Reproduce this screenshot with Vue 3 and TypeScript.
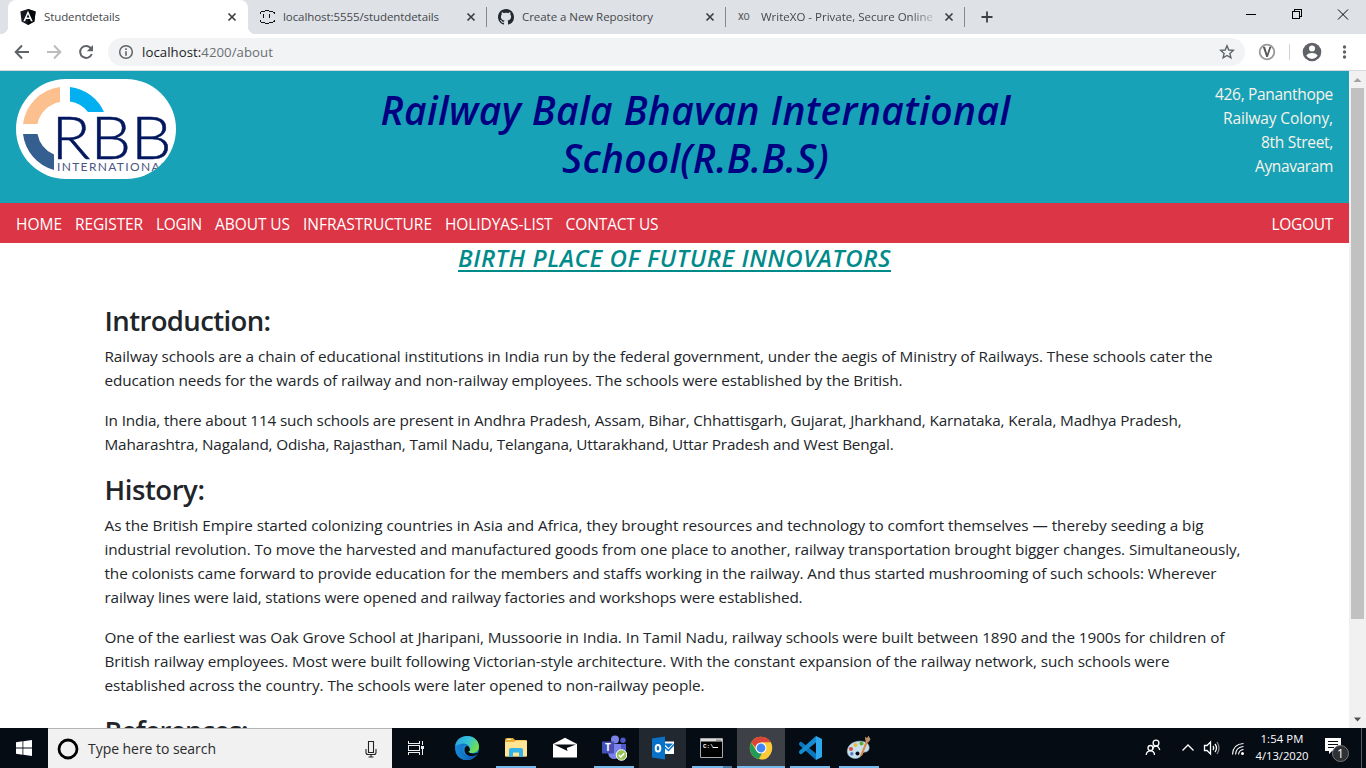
<script setup lang="ts">
import type { Directive } from 'vue'

interface Line { text: string; width: number }
interface Section { title: Line; paragraphs: Line[][] }

// Tracks a line of text out (or in) so that it fills its measure exactly.
const vFit: Directive<HTMLElement, number> = {
  mounted(el, { value }) {
    const count = (el.textContent ?? '').length
    const natural = el.getBoundingClientRect().width
    if (count > 0) el.style.letterSpacing = `${(value - natural) / count}px`
  },
}

const navItems: Line[] = [
  { text: 'HOME', width: 46 },
  { text: 'REGISTER', width: 68 },
  { text: 'LOGIN', width: 46 },
  { text: 'ABOUT US', width: 75 },
  { text: 'INFRASTRUCTURE', width: 129 },
  { text: 'HOLIDYAS-LIST', width: 107.5 },
  { text: 'CONTACT US', width: 93 },
]

const address: Line[] = [
  { text: '426, Pananthope', width: 118 },
  { text: 'Railway Colony,', width: 110 },
  { text: '8th Street,', width: 72 },
  { text: 'Aynavaram', width: 78 },
]

const sections: Section[] = [
  {
    title: { text: 'Introduction:', width: 166 },
    paragraphs: [
      [
        { text: 'Railway schools are a chain of educational institutions in India run by the federal government, under the aegis of Ministry of Railways. These schools cater the', width: 1108 },
        { text: 'education needs for the wards of railway and non-railway employees. The schools were established by the British.', width: 798 },
      ],
      [
        { text: 'In India, there about 114 such schools are present in Andhra Pradesh, Assam, Bihar, Chhattisgarh, Gujarat, Jharkhand, Karnataka, Kerala, Madhya Pradesh,', width: 1077 },
        { text: 'Maharashtra, Nagaland, Odisha, Rajasthan, Tamil Nadu, Telangana, Uttarakhand, Uttar Pradesh and West Bengal.', width: 789 },
      ],
    ],
  },
  {
    title: { text: 'History:', width: 100 },
    paragraphs: [
      [
        { text: 'As the British Empire started colonizing countries in Asia and Africa, they brought resources and technology to comfort themselves — thereby seeding a big', width: 1099 },
        { text: 'industrial revolution. To move the harvested and manufactured goods from one place to another, railway transportation brought bigger changes. Simultaneously,', width: 1136 },
        { text: 'the colonists came forward to provide education for the members and staffs working in the railway. And thus started mushrooming of such schools: Wherever', width: 1112 },
        { text: 'railway lines were laid, stations were opened and railway factories and workshops were established.', width: 698 },
      ],
      [
        { text: 'One of the earliest was Oak Grove School at Jharipani, Mussoorie in India. In Tamil Nadu, railway schools were built between 1890 and the 1900s for children of', width: 1120 },
        { text: 'British railway employees. Most were built following Victorian-style architecture. With the constant expansion of the railway network, such schools were', width: 1065 },
        { text: 'established across the country. The schools were later opened to non-railway people.', width: 600 },
      ],
    ],
  },
  { title: { text: 'References:', width: 143 }, paragraphs: [] },
]
</script>

<template>
  <div class="screen">
    <div class="tabstrip">
      <div class="tab active">
        <svg class="fav" viewBox="0 0 16 16"><path d="M8 0 15.6 2.6 14.4 12.6 8 16 1.6 12.6.4 2.6Z" fill="#14181f" /><path d="M8 0 15.6 2.6 14.4 12.6 8 16Z" fill="#04070c" /><path d="M8 1.8 3.3 12.2H5.1L6 9.9H10L10.9 12.2H12.7ZM8 5.2 9.4 8.4H6.6Z" fill="#fff" fill-rule="evenodd" /></svg>
        <span class="label"><span v-fit="76">Studentdetails</span></span>
        <svg class="x" viewBox="0 0 10 10"><path d="M1.5 1.5 8.5 8.5M8.5 1.5 1.5 8.5" /></svg>
      </div>
      <div class="tab second">
        <svg class="fav" viewBox="0 0 16 16" fill="none" stroke="#111" shape-rendering="crispEdges"><path d="M1 4.500V3.500H2M2 2.500H6M6 1.500H10M10 2.500H14M14 3.500H15V4.500M1 10.500V12.500H2M2 13.500H6M6 14.500H10M10 13.500H14M14 12.500H15V10.500M4.500 5V9M10.500 5V9" /></svg>
        <span class="label"><span v-fit="156">localhost:5555/studentdetails</span></span>
        <svg class="x" viewBox="0 0 10 10"><path d="M1.5 1.5 8.5 8.5M8.5 1.5 1.5 8.5" /></svg>
      </div>
      <div class="tab third">
        <svg class="fav" viewBox="0 0 16 16"><path fill="#24292e" d="M8 0C3.58 0 0 3.58 0 8c0 3.54 2.29 6.53 5.47 7.59.4.07.55-.17.55-.38 0-.19-.01-.82-.01-1.49-2.01.37-2.53-.49-2.69-.94-.09-.23-.48-.94-.82-1.13-.28-.15-.68-.52-.01-.53.63-.01 1.08.58 1.23.82.72 1.21 1.87.87 2.33.66.07-.52.28-.87.51-1.07-1.78-.2-3.64-.89-3.64-3.95 0-.87.31-1.59.82-2.15-.08-.2-.36-1.02.08-2.12 0 0 .67-.21 2.2.82.64-.18 1.32-.27 2-.27s1.36.09 2 .27c1.53-1.04 2.2-.82 2.2-.82.44 1.1.16 1.92.08 2.12.51.56.82 1.27.82 2.15 0 3.07-1.87 3.75-3.65 3.95.29.25.54.73.54 1.48 0 1.07-.01 1.93-.01 2.2 0 .21.15.46.55.38A8.01 8.01 0 0 0 16 8c0-4.42-3.58-8-8-8Z" /></svg>
        <span class="label"><span v-fit="131">Create a New Repository</span></span>
        <svg class="x" viewBox="0 0 10 10"><path d="M1.5 1.5 8.5 8.5M8.5 1.5 1.5 8.5" /></svg>
      </div>
      <div class="tab third">
        <span class="fav xo">XO</span>
        <span class="label fade"><span v-fit="172">WriteXO - Private, Secure Online</span></span>
        <svg class="x" viewBox="0 0 10 10"><path d="M1.5 1.5 8.5 8.5M8.5 1.5 1.5 8.5" /></svg>
      </div>
      <svg class="plus" viewBox="0 0 14 14"><path d="M7 1.500V12.500M1.500 7H12.500" stroke="#3c4043" stroke-width="1.800" /></svg>
      <svg class="winbtns" viewBox="0 0 110 20" fill="none" stroke="#000" stroke-width="1"><path d="M0 10.500H10M46.500 7.500H53.500V14.500H46.500ZM48.500 7V5.500H55.500V12.500H54" shape-rendering="crispEdges" /><path d="M92 5.500 102 15.500M102 5.500 92 15.500" /></svg>
    </div>

    <div class="toolbar">
      <svg class="navicons" viewBox="0 0 100 36" fill="none" stroke-width="2"><path d="M29 18H16M22 11.500 15.700 18 22 24.500" stroke="#5f6368" /><path d="M47 18H60M54 11.500 60.300 18 54 24.500" stroke="#babcbe" /><path d="M91.200 14.600A6 6 0 1 0 91.800 20" stroke="#5f6368" /><path d="M93 11V17.200H86.800Z" fill="#5f6368" /></svg>
      <div class="omnibox">
        <svg class="info" viewBox="0 0 16 16"><circle cx="8" cy="8" r="6.300" fill="none" stroke="#5f6368" stroke-width="1.500" /><path d="M8 4.300V5.900M8 7.200V11.700" stroke="#5f6368" stroke-width="1.600" /></svg>
        <span class="url" v-fit="131">localhost:<i>4200/about</i></span>
        <svg class="star" viewBox="0 0 16 16"><path d="M8 1.800 9.800 6 14.300 6.400 10.900 9.400 11.900 13.800 8 11.500 4.100 13.800 5.100 9.400 1.700 6.400 6.200 6Z" fill="none" stroke="#5f6368" stroke-width="1.400" /></svg>
      </div>
      <svg class="toolicons" viewBox="0 0 112 36"><circle cx="16" cy="18" r="7.300" fill="#fff" stroke="#999" stroke-width="1.800" /><path d="M11.800 12.800H14L16.200 19.800 18.400 12.800H20.400L16.800 23H15.300Z" fill="#555" /><path d="M38.500 10V26" stroke="#d0d2d5" /><circle cx="61" cy="18" r="9.300" fill="#5f6368" /><circle cx="61" cy="14.600" r="3" fill="#fff" /><path d="M55.300 21.800Q56.500 18.900 61 18.900T66.700 21.800Q64.500 24.900 61 24.900T55.300 21.800Z" fill="#fff" /><g fill="#5f6368"><circle cx="93.500" cy="13" r="1.700" /><circle cx="93.500" cy="18" r="1.700" /><circle cx="93.500" cy="23" r="1.700" /></g></svg>
    </div>

    <div class="viewport">
      <main class="page">
        <header class="banner">
          <svg class="logo" viewBox="0 0 160 100">
            <path d="M7 45A42.500 42.500 0 0 1 44 8V23A28 28 0 0 0 21.500 45Z" fill="#fcc08f" />
            <path d="M54 8A42.500 42.500 0 0 1 88 33H72A28 28 0 0 0 54 22.500Z" fill="#02aff0" />
            <path d="M7 55H21.500A28 28 0 0 0 38 75.500V91A42.500 42.500 0 0 1 7 55Z" fill="#355f91" />
            <text class="rbb" x="35.500" y="80" textLength="120" lengthAdjust="spacingAndGlyphs">RBB</text>
            <text class="intl" x="41" y="92" textLength="110">INTERNATIONAL</text>
          </svg>
          <h1><span v-fit="630">Railway Bala Bhavan International</span><br><span v-fit="267">School(R.B.B.S)</span></h1>
          <div class="address">
            <div v-for="line in address" :key="line.text"><span v-fit="line.width">{{ line.text }}</span></div>
          </div>
        </header>
        <nav class="menu">
          <a v-for="item in navItems" :key="item.text" v-fit="item.width">{{ item.text }}</a>
          <a class="logout" v-fit="61.5">LOGOUT</a>
        </nav>
        <h3 class="motto"><span v-fit="433">BIRTH PLACE OF FUTURE INNOVATORS</span></h3>
        <article class="content">
          <section v-for="section in sections" :key="section.title.text">
            <h2><span v-fit="section.title.width">{{ section.title.text }}</span></h2>
            <p v-for="(lines, i) in section.paragraphs" :key="i">
              <template v-for="line in lines" :key="line.text"><span v-fit="line.width">{{ line.text }}</span><br></template>
            </p>
          </section>
        </article>
      </main>
      <div class="scrollbar">
        <svg viewBox="0 0 17 17"><path d="M4.500 11 8.500 7 12.500 11Z" fill="#a3a3a3" /></svg>
        <div class="thumb"></div>
        <svg viewBox="0 0 17 17"><path d="M5 6.500 8.500 10.500 12 6.500Z" fill="#505050" /></svg>
      </div>
    </div>

    <footer class="taskbar">
      <div class="start"><svg width="16" height="16" viewBox="0 0 16 16" fill="#fff"><path d="M0 2.200 6.500 1.300V7.500H0ZM7.300 1.200 16 0V7.500H7.300ZM0 8.400H6.500V14.700L0 13.800ZM7.300 8.400H16V16L7.300 14.800Z" /></svg></div>
      <div class="search">
        <svg width="24" height="24" viewBox="0 0 24 24"><circle cx="12" cy="12" r="9" fill="none" stroke="#000" stroke-width="2.800" /></svg>
        <span v-fit="128">Type here to search</span>
        <svg class="mic" width="14" height="18" viewBox="0 0 14 18" fill="none" stroke="#222" stroke-width="1.100"><path d="M4.500 1.500H9.500V12.500H4.500ZM2 9V12.500Q2 14.500 4 14.500H10Q12 14.500 12 12.500V9M7 14.500V17M4.500 17H9.500" /></svg>
      </div>
      <div class="app taskview"><svg width="18" height="18" viewBox="0 0 18 18" fill="none" stroke="#eee" shape-rendering="crispEdges"><path d="M1.500 2V4.500H12.500V2M1.500 16V13.500H12.500V16M1.500 6.500H12.500V11.500H1.500ZM15.500 2V6M15.500 10V16" /><path d="M14 8H17" stroke-width="3" /></svg></div>
      <div class="app"><svg width="26" height="26" viewBox="0 0 26 26">
        <defs><linearGradient id="edgeTop" x1="0" x2="1" y1="0" y2=".5"><stop stop-color="#2a9fe0" /><stop offset=".55" stop-color="#35c3d8" /><stop offset="1" stop-color="#6fe04d" /></linearGradient><linearGradient id="edgeLow" x1="0" x2="1"><stop stop-color="#1688d8" /><stop offset="1" stop-color="#0d53a5" /></linearGradient></defs>
        <circle cx="13" cy="13" r="12" fill="#1784d6" /><path d="M1.200 11C2 4.500 7.500 1 13 1 20 1 25 6 25 11.500 25 16 21.500 18 18 18 14.500 18 14.200 16.500 14.800 15.500 17 12 13.500 8.500 9.500 8.500 5.500 8.500 2.500 10 1.200 11Z" fill="url(#edgeTop)" /><path d="M8.500 15C7.500 10.500 11 9 14 9.500 10 8 5.500 9 3.500 12-1 20 7 25.500 13.500 25 18 24.700 22 21.500 23.200 19 17 22.500 9.500 20.500 8.500 15Z" fill="url(#edgeLow)" /><path d="M11 12.500Q13.500 9 15.300 12.500T14.400 16.300Q15 18.500 19 18.500 22 18.500 23.500 17.500 24.500 18 23.200 19.300C17 23.500 8.500 20 11 12.500Z" fill="#080d14" /></svg></div>
      <div class="app open"><svg width="24" height="22" viewBox="0 0 24 22"><path d="M1 3Q1 1 3 1H9L11 3H21Q23 3 23 5V18Q23 19.500 21 19.500H3Q1 19.500 1 18Z" fill="#e7ad2d" /><path d="M1 5H10L12 3.500H23V19.500H1Z" fill="#ffe494" /><path d="M3 2.400H7" stroke="#fff" /><path d="M5 20V13Q5 11 7 11H17Q19 11 19 13V20H15V16Q15 15.500 14.500 15.500H9.500Q9 15.500 9 16V20Z" fill="#35b2e9" /></svg></div>
      <div class="app"><svg width="24" height="22" viewBox="0 0 24 22"><path d="M0 7 12 .8 24 7V20.500H0Z" fill="#fff" /><path d="M1 7.500 14.500 14 13.800 11 23 7.500 17.500 7.500Z" fill="#080d14" /></svg></div>
      <div class="app open"><svg width="26" height="26" viewBox="0 0 26 26"><circle cx="14" cy="4.500" r="4" fill="#7b83eb" /><circle cx="22" cy="5.200" r="2.700" fill="#5059c9" /><path d="M17 9H25V16Q24 20 19 19Z" fill="#5059c9" /><path d="M7 9H20V17Q19 24 13.500 24T7 18Z" fill="#7b83eb" /><path d="M1 6.500H13V18.500H1Z" fill="#464eb8" /><text class="glyph" x="7" y="16" text-anchor="middle" font-size="10">T</text><circle cx="20.500" cy="20" r="5.300" fill="#92c353" stroke="#fff" /><path d="M17.800 20 19.800 22 23.300 18.200" fill="none" stroke="#fff" stroke-width="1.600" /></svg></div>
      <div class="app shaded"><svg width="24" height="24" viewBox="0 0 24 24"><path d="M11 5.500H23V18H11Z" fill="#fff" /><path d="M13 7.500H22L17.500 12Z" fill="#0872c9" /><path d="M12 9.500 17.500 14.500 23 8.500" fill="none" stroke="#0872c9" stroke-width="1.500" /><path d="M1 2.500 14 .5V23.500L1 21.500Z" fill="#0872c9" /><ellipse cx="7" cy="12.200" rx="2.300" ry="3.300" fill="none" stroke="#fff" stroke-width="2" /></svg></div>
      <div class="app open split"><svg width="23" height="20" viewBox="0 0 23 20"><path d="M.5.5H22.500V19.500H.5Z" fill="#000" stroke="#aaa" /><path d="M1 1H22V3.500H1Z" fill="#ddd" /><path d="M16 2.200H21" stroke="#777" /><text class="cmd" x="3" y="10">C:\</text><path d="M13 9.500H18" stroke="#fff" /></svg></div>
      <div class="app current"><svg width="24" height="24" viewBox="0 0 24 24"><circle cx="12" cy="12" r="11.200" fill="#fbc62d" /><path d="M12 12H7.200L2.300 6.400A11.200 11.200 0 0 1 21.700 6.400H12Z" fill="#dc4437" /><path d="M2.300 6.400 7.200 14.800 12 17.500 9.500 23A11.200 11.200 0 0 1 2.300 6.400Z" fill="#239b58" /><path d="M14.500 14.500 9.800 23 6.500 14.500Z" fill="#239b58" /><path d="M12 6.400H21.700Q24.500 12 21 18.600T10.800 23L16.800 14.800Z" fill="#fccb38" /><circle cx="12" cy="12" r="5.500" fill="#fff" /><circle cx="12" cy="12" r="4.400" fill="#4285f4" /></svg></div>
      <div class="app open"><svg width="24" height="24" viewBox="0 0 24 24"><path d="M1 7 3 5.500 18 17.500V24L1.200 9Z" fill="#0a78be" /><path d="M1 17 3 18.500 18 6.500V0L1.200 15Z" fill="#168bd0" /><path d="M18 0 24 3V21L18 24Z" fill="#2da8ee" /></svg></div>
      <div class="app open"><svg width="26" height="26" viewBox="0 0 26 26"><path d="M2 13C4 7 14 4 21 8 25 12 23 17 19 17 15 17 17 21 12 23 6 25-1 20 2 13Z" fill="#c8e0ed" stroke="#8fb4c8" stroke-width=".7" /><circle cx="11.500" cy="18.500" r="2" fill="#08111a" /><circle cx="5" cy="14" r="2" fill="#d84b3e" /><circle cx="9.500" cy="10" r="2" fill="#efbb35" /><circle cx="15.500" cy="8.500" r="2" fill="#61aa36" /><circle cx="5.800" cy="18.800" r="1.700" fill="#537dc4" /><path d="M13.500 22 20 6 22 6.500 16.500 20Z" fill="#dc873b" /><path d="M19.500 6.500 19 1.800 21 3 22.500 .8 24.500 4.500 22.300 7.500Z" fill="#bd8f68" /></svg></div>
      <div class="tray">
        <svg width="110" height="24" viewBox="0 0 110 24" fill="none" stroke="#fff" stroke-width="1.300"><circle cx="12" cy="7" r="2.900" /><path d="M8.500 13Q9.500 10.200 12 10.200T15.800 14" /><circle cx="6.500" cy="12" r="2.500" /><path d="M2.200 19Q2.500 14.800 6.500 14.800T10.500 19" /><path d="M38.500 14.500 44 9 49.500 14.500" /><path d="M60.500 9.500H63L66.500 6V18L63 14.500H60.500ZM69 10Q70.500 12 69 14M71 8Q74 12 71 16" /><path d="M73 6Q77 12 73 18" stroke="#888" /><path d="M88.500 18.500Q89 8 99.500 7.500M91.500 18.500Q92 11 99.500 10.500M94.500 18.500Q95 14 99.500 13.500" stroke-width="1.100" /><circle cx="98.500" cy="17.500" r="1.500" fill="#fff" stroke="none" /></svg>
        <div class="clock"><span v-fit="43">1:54 PM</span><span v-fit="53">4/13/2020</span></div>
        <svg class="notes" width="28" height="28" viewBox="0 0 28 28"><path d="M1 2H17V15H8L5 18V15H1Z" fill="#fff" /><path d="M4 5.500H14M4 8.500H14M4 11.500H10" stroke="#080d14" /><circle cx="16.500" cy="17.500" r="8" fill="#2e3033" stroke="#777" /><text x="16.500" y="22" text-anchor="middle" fill="#fff" font-size="12">1</text></svg>
        <div class="peek"></div>
      </div>
    </footer>
  </div>
</template>

<style>
body { margin: 0; overflow: hidden; background: #fff; }
</style>

<style scoped>
* { box-sizing: border-box; }
svg { display: block; flex: none; }
.screen { width: 1366px; height: 768px; display: flex; flex-direction: column; overflow: hidden; font-family: "Open Sans", "Noto Sans", sans-serif; color: #212529; }
.screen span, .screen a { display: inline-block; white-space: nowrap; }

.tabstrip { height: 34px; background: #dee1e6; display: flex; padding-left: 8px; flex: none; }
.tab { width: 239px; height: 34px; padding: 0 11px 0 12px; display: flex; align-items: center; position: relative; font-size: 11.500px; color: #45484c; }
.tab.active { width: 240px; background: #fff; border-radius: 8px 8px 0 0; }
.tab.active::before, .tab.active::after { content: ""; position: absolute; bottom: 0; width: 8px; height: 8px; }
.tab.active::before { left: -8px; background: radial-gradient(circle at 0 0, transparent 8px, #fff 8.500px); }
.tab.active::after { right: -8px; background: radial-gradient(circle at 100% 0, transparent 8px, #fff 8.500px); }
.tab:not(.active)::after { content: ""; position: absolute; right: 0; top: 7px; height: 20px; width: 1px; background: #85888d; }
.tab.second, .tab.third { padding-left: 11px; }
.fav { width: 16px; height: 16px; margin-right: 8px; }
.screen .xo { font: 500 9px/16px Roboto, sans-serif; color: #666; padding-left: 1px; }
.label { width: 175px; height: 20px; line-height: 19px; overflow: hidden; }
.label.fade { mask-image: linear-gradient(90deg, #000 150px, transparent 178px); }
.x { width: 10px; height: 10px; margin-left: auto; stroke: #3c4043; stroke-width: 1.700; }
.plus { width: 14px; height: 14px; margin: 10px 0 0 15px; }
.winbtns { width: 110px; height: 20px; margin: 4px 10px 0 auto; }

.toolbar { height: 37px; border-bottom: 1px solid #d5d8dc; display: flex; align-items: flex-start; flex: none; }
.navicons { width: 100px; height: 36px; }
.omnibox { width: 1137px; height: 28px; margin: 4px 0 0 8px; border-radius: 14px; background: #f1f3f4; display: flex; align-items: center; padding: 0 10px; }
.info { width: 16px; height: 16px; }
.url { margin-left: 8px; font-size: 13.200px; line-height: 26px; color: #202124; }
.url i { font-style: normal; color: #6b6f74; }
.star { width: 16px; height: 16px; margin-left: auto; }
.toolicons { width: 112px; height: 36px; margin-left: 6px; }

.viewport { height: 657px; display: flex; flex: none; overflow: hidden; }
.page { width: 1349px; overflow: hidden; }
.banner { height: 132px; padding: 8px 16px; background: #17a2b8; display: flex; justify-content: space-between; }
.logo { width: 160px; height: 100px; border-radius: 50px; background: #fff; overflow: hidden; }
.rbb { font: 300 58.500px Lato, sans-serif; fill: #03175e; stroke: #03175e; stroke-width: .5px; }
.intl { font: 400 12px Lato, sans-serif; fill: #4a5785; }
h1 { width: 700px; margin: 7px 0 0 22px; font-size: 39px; line-height: 48px; font-weight: 600; font-style: italic; text-align: center; color: #000080; }
.address { width: 140px; margin-top: 3px; text-align: right; font-size: 15.500px; line-height: 24px; color: #f8f3e8; }
.menu { height: 40px; padding: 1px 16px 0; background: #dc3545; display: flex; gap: 13px; align-items: center; color: #fff; font-size: 15.500px; }
.logout { margin-left: auto; }
.motto { margin: 0; height: 60px; font-size: 24px; line-height: 30px; font-weight: 600; font-style: italic; text-align: center; color: #008b8b; }
.motto span { text-decoration: underline; text-decoration-thickness: 2px; text-underline-offset: 3px; text-decoration-skip-ink: none; }
.content { padding-left: 104.500px; }
.content h2 { margin: 0; height: 41px; padding-top: 1px; font-size: 27.500px; line-height: 33.600px; font-weight: 600; }
.content p { margin: 0 0 16px; font-size: 15.300px; line-height: 24px; }
.content p span, .content h2 span { vertical-align: top; }
.scrollbar { width: 17px; background: #f1f1f1; display: flex; flex-direction: column; }
.scrollbar svg { width: 17px; height: 17px; }
.thumb { width: 13px; height: 531px; margin: 0 2px auto; background: #c1c1c1; }

.taskbar { height: 40px; background: #060c14; display: flex; flex: none; }
.start { width: 48px; display: grid; place-items: center; }
.search { width: 344px; background: #f1f1f1; border-top: 1px solid #b5b5b5; display: flex; align-items: center; padding: 0 14px 0 8px; font-size: 14px; color: #2b2b2b; }
.search span { margin-left: 8px; }
.mic { margin-left: auto; }
.app { width: 49px; height: 40px; display: grid; place-items: center; position: relative; }
.app.taskview { width: 50px; padding-right: 2px; }
.app.open::after, .app.current::after { content: ""; position: absolute; left: 5px; bottom: 0; width: 40px; height: 2px; background: #76b9ed; }
.app.shaded { background: linear-gradient(90deg, transparent 1px, #222830 1px, #222830 48px, transparent 48px); }
.app.split::after { background: linear-gradient(90deg, #76b9ed 31px, #4f7ea5 31px); }
.app.current { width: 48px; margin: 0 0 0 1px; background: #3d4046; }
.app.current::after { left: 0; width: 48px; }
.glyph { font-weight: 700; fill: #fff; }
.cmd { font: 700 6px "Liberation Mono", monospace; fill: #fff; }
.tray { margin-left: auto; display: flex; align-items: center; color: #fff; }
.tray > svg:first-child { margin-right: 1px; }
.clock { width: 60px; margin-left: -3px; display: flex; flex-direction: column; align-items: center; font-size: 11.300px; line-height: 18px; }
.clock span { margin-top: -1px; }
.notes { margin: 4px 0 0 12px; }
.peek { width: 1px; height: 40px; margin: 0 4px 0 9px; background: #555a60; }
</style>
